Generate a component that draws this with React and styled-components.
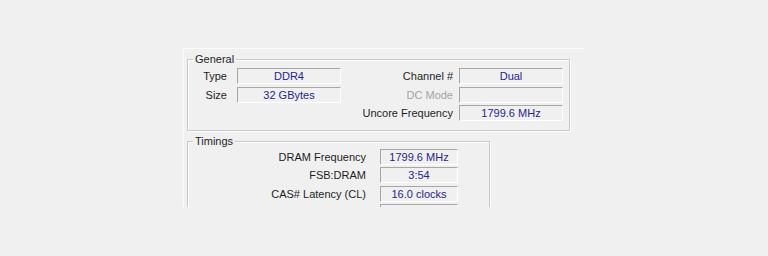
import React from "react";
import styled, { createGlobalStyle } from "styled-components";

const GlobalStyle = createGlobalStyle`
  html, body {
    margin: 0;
    padding: 0;
    background: #f0f0f0;
    height: 256px;
    overflow: hidden;
  }
  body {
    font-family: "Liberation Sans", Arial, sans-serif;
    font-size: 11px;
  }
`;

const Stage = styled.div`
  padding: 48px 0 0 183px;
`;

// the window is cropped at the bottom edge, so the panel clips its content
const Panel = styled.div`
  width: 402px;
  height: 159px;
  box-sizing: border-box;
  border-top: 1px solid #fbfbfb;
  border-left: 1px solid #fbfbfb;
  padding: 10px 0 0 3px;
  display: flex;
  flex-direction: column;
  gap: 10px;
  overflow: hidden;
`;

const Group = styled.div`
  position: relative;
  width: ${(p) => p.$width}px;
  flex-shrink: 0;
  box-sizing: border-box;
  border: 1px solid #c9c9c9;
  box-shadow: inset 1px 1px 0 #ffffff, 1px 1px 0 #ffffff;
  padding: ${(p) => p.$pad};
`;

const Legend = styled.span`
  position: absolute;
  top: -8px;
  left: 5px;
  padding: 0 2px;
  background: #f0f0f0;
  color: #1e1e1e;
  line-height: 14px;
`;

const GeneralGrid = styled.div`
  display: grid;
  grid-template-columns: 46px 104px 1fr 104px;
  grid-auto-rows: 18.5px;
`;

const TimingGrid = styled.div`
  display: grid;
  grid-template-columns: 1fr 78px;
  grid-auto-rows: 18.5px;
`;

const Label = styled.div`
  grid-column: ${(p) => p.$col || "auto"};
  text-align: right;
  padding-right: ${(p) => p.$gap}px;
  color: ${(p) => (p.$dim ? "#a3a3a3" : "#1e1e1e")};
  line-height: 16px;
  white-space: nowrap;
`;

const Field = styled.div`
  grid-column: ${(p) => p.$col || "auto"};
  height: 16px;
  box-sizing: border-box;
  border-top: 1px solid #a6a6a6;
  border-left: 1px solid #a6a6a6;
  border-bottom: 1px solid #ffffff;
  border-right: 1px solid #ffffff;
  color: #25258f;
  text-align: center;
  line-height: 14px;
  white-space: nowrap;
`;

const timings = [
  ["DRAM Frequency", "1799.6 MHz"],
  ["FSB:DRAM", "3:54"],
  ["CAS# Latency (CL)", "16.0 clocks"],
  ["", ""],
];

export default function App() {
  return (
    <>
      <GlobalStyle />
      <Stage>
        <Panel>
          <Group $width={383} $pad="8px 6px 6px 3px">
            <Legend>General</Legend>
            <GeneralGrid>
              <Label $gap={10}>Type</Label>
              <Field>DDR4</Field>
              <Label $gap={6}>Channel #</Label>
              <Field>Dual</Field>

              <Label $gap={10}>Size</Label>
              <Field>32 GBytes</Field>
              <Label $gap={6} $dim>DC Mode</Label>
              <Field />

              <Label $gap={6} $col={3}>Uncore Frequency</Label>
              <Field $col={4}>1799.6 MHz</Field>
            </GeneralGrid>
          </Group>

          <Group $width={303} $pad="7px 31px 40px 0">
            <Legend>Timings</Legend>
            <TimingGrid>
              {timings.map(([label, value], i) => (
                <React.Fragment key={i}>
                  <Label $gap={14}>{label}</Label>
                  <Field>{value}</Field>
                </React.Fragment>
              ))}
            </TimingGrid>
          </Group>
        </Panel>
      </Stage>
    </>
  );
}
